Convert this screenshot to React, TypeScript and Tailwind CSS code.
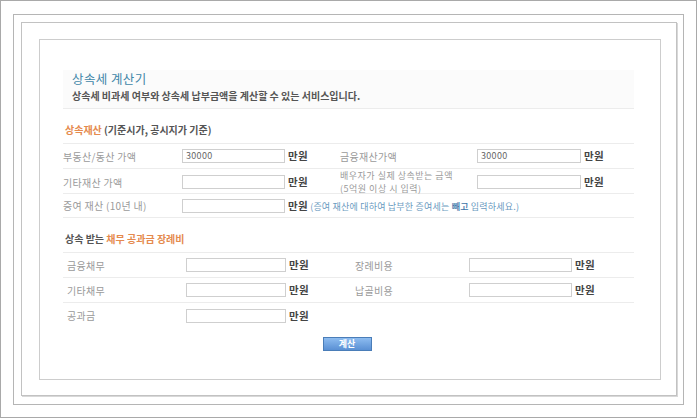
import React from 'react';

const font = { fontFamily: '"Noto Sans CJK KR", "Noto Sans", sans-serif' };

function Field({ value, w }: { value?: string; w: string }) {
  return (
    <div className={`h-[14px] ${w} border border-[#cfcfcf] bg-white flex items-center pl-[3px] text-[9px] text-[#666]`}>
      {value}
    </div>
  );
}

function Unit() {
  return <span className="text-[10.5px] font-bold text-[#444]">만원</span>;
}

export default function App() {
  return (
    <div style={font} className="w-[697px] h-[418px] bg-white border border-[#a9a9a9] pt-[13px] px-[12px] pb-[12px] flex">
      <div className="flex-1 border border-[#b5b5b5] pt-[7px] pl-[7px] pr-[6px] pb-[8px] flex">
        <div className="flex-1 border border-[#c2c2c2] shadow-[1px_1px_0_#d8d8d8] pt-[16px] pl-[17px] pr-[15px] pb-[15px] flex">
          <div className="flex-1 border border-[#cdcdcd] bg-white pt-[30px] pl-[23px] pr-[26px]">
            {/* title */}
            <div className="h-[39px] bg-[#fbfbfb] border-b border-[#ececec] pl-[9px]">
              <div className="text-[12.5px] leading-[18px] text-[#3f86a8] tracking-[0.4px]">상속세 계산기</div>
              <div className="text-[10px] leading-[15px] font-bold text-[#555]">
                상속세 비과세 여부와 상속세 납부금액을 계산할 수 있는 서비스입니다.
              </div>
            </div>

            {/* section 1 */}
            <div className="h-[34px] flex items-end pb-[6px] pl-[2px] text-[10px] leading-[14px] font-bold text-[#555]">
              <span className="text-[#e58a4e]">상속재산</span>&nbsp;(기준시가, 공시지가 기준)
            </div>
            <div className="border-t border-[#ececec] text-[10px] text-[#9a9a9a] tracking-[0.3px]">
              <div className="h-[25px] border-b border-[#ececec] grid grid-cols-[119px_103px_55px_137px_104px_1fr] items-center">
                <span>부동산/동산 가액</span>
                <Field value="30000" w="w-[103px]" />
                <span className="pl-[3px]"><Unit /></span>
                <span>금융재산가액</span>
                <Field value="30000" w="w-[104px]" />
                <span className="pl-[3px]"><Unit /></span>
              </div>
              <div className="h-[25px] border-b border-[#ececec] grid grid-cols-[119px_103px_55px_137px_104px_1fr] items-center">
                <span>기타재산 가액</span>
                <Field w="w-[103px]" />
                <span className="pl-[3px]"><Unit /></span>
                <span className="text-[9px] leading-[13px] tracking-[0.5px]">배우자가 실제 상속받는 금액<br />(5억원 이상 시 입력)</span>
                <Field w="w-[104px]" />
                <span className="pl-[3px]"><Unit /></span>
              </div>
              <div className="h-[24px] border-b border-[#ececec] grid grid-cols-[119px_103px_1fr] items-center">
                <span>증여 재산 (10년 내)</span>
                <Field w="w-[103px]" />
                <span className="pl-[3px] whitespace-nowrap">
                  <Unit />
                  <span className="text-[9px] text-[#6a9ac0] tracking-[0.2px]">
                    {' '}(증여 재산에 대하여 납부한 증여세는 <span className="font-medium text-[#3d74a8]">빼고</span> 입력하세요.)
                  </span>
                </span>
              </div>
            </div>

            {/* section 2 */}
            <div className="h-[34px] flex items-end pb-[6px] pl-[2px] text-[10px] leading-[14px] font-bold text-[#555]">
              상속 받는&nbsp;<span className="text-[#e58a4e]">채무 공과금 장례비</span>
            </div>
            <div className="border-t border-[#ececec] text-[10px] text-[#9a9a9a] tracking-[0.3px]">
              <div className="h-[25px] border-b border-[#ececec] grid grid-cols-[123px_100px_69px_114px_103px_1fr] items-center">
                <span className="pl-[4px]">금융채무</span>
                <Field w="w-[100px]" />
                <span className="pl-[3px]"><Unit /></span>
                <span>장례비용</span>
                <Field w="w-[103px]" />
                <span className="pl-[3px]"><Unit /></span>
              </div>
              <div className="h-[25px] border-b border-[#ececec] grid grid-cols-[123px_100px_69px_114px_103px_1fr] items-center">
                <span className="pl-[4px]">기타채무</span>
                <Field w="w-[100px]" />
                <span className="pl-[3px]"><Unit /></span>
                <span>납골비용</span>
                <Field w="w-[103px]" />
                <span className="pl-[3px]"><Unit /></span>
              </div>
              <div className="h-[25px] grid grid-cols-[123px_100px_1fr] items-center">
                <span className="pl-[4px]">공과금</span>
                <Field w="w-[100px]" />
                <span className="pl-[3px]"><Unit /></span>
              </div>
            </div>

            <div className="flex justify-center mt-[9px] pr-[3px]">
              <button className="w-[49px] h-[14px] bg-gradient-to-b from-[#8dbcf0] to-[#5a90d4] border border-[#4a7db8] text-white text-[9px] font-bold leading-[12px]">
                계산
              </button>
            </div>
          </div>
        </div>
      </div>
    </div>
  );
}
